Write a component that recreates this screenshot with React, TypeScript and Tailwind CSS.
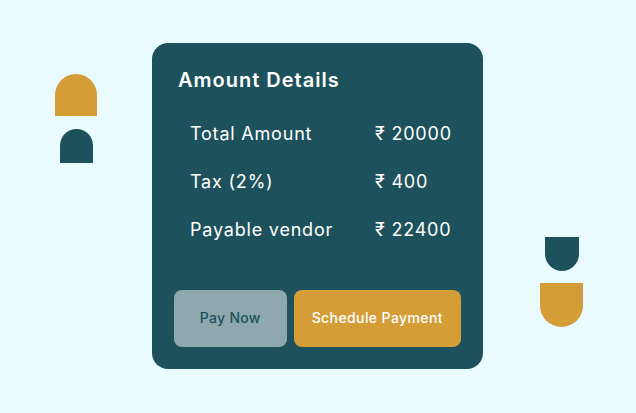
export default function App() {
  return (
    <div
      className="relative w-[636px] h-[413px] overflow-hidden bg-[#e9fbfe] pt-[43px] pl-[152px]"
      style={{ fontFamily: "Inter, 'Noto Sans', sans-serif" }}
    >
      {/* decorative shapes */}
      <div className="absolute left-[55px] top-[74px] w-[42px] h-[42px] bg-[#d49d38] rounded-t-full" />
      <div className="absolute left-[60px] top-[129px] w-[33px] h-[34px] bg-[#1d525c] rounded-t-full" />
      <div className="absolute left-[545px] top-[237px] w-[34px] h-[34px] bg-[#1d525c] rounded-b-full" />
      <div className="absolute left-[540px] top-[283px] w-[43px] h-[44px] bg-[#d49d38] rounded-b-full" />

      <div className="w-[331px] h-[326px] bg-[#1d525c] rounded-[16px] flex flex-col px-[22px] pb-[22px] pt-[23px]">
        <h2 className="pl-[4px] text-[20px] leading-[28px] font-semibold text-white tracking-[1px]">
          Amount Details
        </h2>
        <div className="flex flex-col gap-[24px] mt-[28px] pl-[16px] text-[18px] leading-[24px] text-white tracking-[0.8px]">
          <div className="flex">
            <span className="w-[185px]">Total Amount</span>
            <span>₹ 20000</span>
          </div>
          <div className="flex">
            <span className="w-[185px]">Tax (2%)</span>
            <span>₹ 400</span>
          </div>
          <div className="flex">
            <span className="w-[185px]">Payable vendor</span>
            <span>₹ 22400</span>
          </div>
        </div>
        <div className="mt-auto flex gap-[7px] h-[57px]">
          <button className="w-[113px] h-full pb-[3px] rounded-[8px] bg-[#8ea8ad] text-[#1d525c] text-[14px] font-medium tracking-[0.3px]">
            Pay Now
          </button>
          <button className="w-[168px] h-full pb-[3px] rounded-[8px] bg-[#d49d38] text-white text-[14px] font-medium tracking-[0.4px]">
            Schedule Payment
          </button>
        </div>
      </div>
    </div>
  );
}
